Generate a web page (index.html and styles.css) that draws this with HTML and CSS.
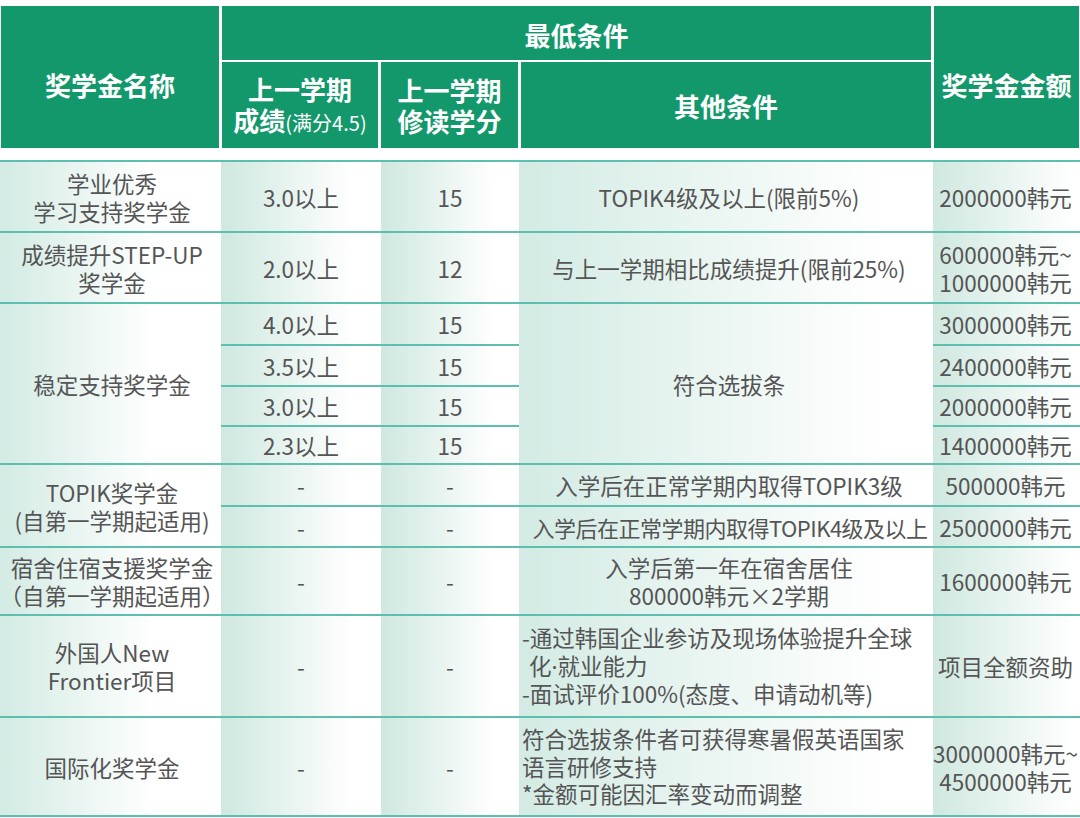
FILE: index.html
```html
<!DOCTYPE html>
<html lang="zh-CN">
<head>
<meta charset="utf-8">
<title>奖学金</title>
<link rel="stylesheet" href="styles.css">
</head>
<body>
<div class="sheet">
  <div class="head">
    <div class="hc h-name"><span>奖学金名称</span></div>
    <div class="hc h-min"><span>最低条件</span></div>
    <div class="hc h-amt"><span>奖学金金额</span></div>
    <div class="hc h-sub"><span>上一学期<br>成绩<span class="small">(满分4.5)</span></span></div>
    <div class="hc h-sub"><span>上一学期<br>修读学分</span></div>
    <div class="hc h-sub"><span>其他条件</span></div>
  </div>

  <div class="body">
    <div class="c c1"><span>学业优秀<br>学习支持奖学金</span></div>
    <div class="c c2"><span>3.0以上</span></div>
    <div class="c c3"><span>15</span></div>
    <div class="c c4"><span>TOPIK4级及以上(限前5%)</span></div>
    <div class="c c5"><span>2000000韩元</span></div>

    <div class="c c1"><span>成绩提升STEP-UP<br>奖学金</span></div>
    <div class="c c2"><span>2.0以上</span></div>
    <div class="c c3"><span>12</span></div>
    <div class="c c4"><span>与上一学期相比成绩提升(限前25%)</span></div>
    <div class="c c5"><span>600000韩元~<br>1000000韩元</span></div>

    <div class="c c1 span4"><span>稳定支持奖学金</span></div>
    <div class="c c2"><span>4.0以上</span></div>
    <div class="c c3"><span>15</span></div>
    <div class="c c4 span4"><span>符合选拔条</span></div>
    <div class="c c5"><span>3000000韩元</span></div>
    <div class="c c2"><span>3.5以上</span></div>
    <div class="c c3"><span>15</span></div>
    <div class="c c5"><span>2400000韩元</span></div>
    <div class="c c2"><span>3.0以上</span></div>
    <div class="c c3"><span>15</span></div>
    <div class="c c5"><span>2000000韩元</span></div>
    <div class="c c2"><span>2.3以上</span></div>
    <div class="c c3"><span>15</span></div>
    <div class="c c5"><span>1400000韩元</span></div>

    <div class="c c1 span2"><span>TOPIK奖学金<br>(自第一学期起适用)</span></div>
    <div class="c c2"><span>-</span></div>
    <div class="c c3"><span>-</span></div>
    <div class="c c4"><span>入学后在正常学期内取得TOPIK3级</span></div>
    <div class="c c5"><span>500000韩元</span></div>
    <div class="c c2"><span>-</span></div>
    <div class="c c3"><span>-</span></div>
    <div class="c c4 tight"><span>入学后在正常学期内取得TOPIK4级及以上</span></div>
    <div class="c c5"><span>2500000韩元</span></div>

    <div class="c c1"><span>宿舍住宿支援奖学金<br>（自第一学期起适用）</span></div>
    <div class="c c2"><span>-</span></div>
    <div class="c c3"><span>-</span></div>
    <div class="c c4"><span>入学后第一年在宿舍居住<br>800000韩元×2学期</span></div>
    <div class="c c5"><span>1600000韩元</span></div>

    <div class="c c1"><span>外国人New<br>Frontier项目</span></div>
    <div class="c c2"><span>-</span></div>
    <div class="c c3"><span>-</span></div>
    <div class="c c4 left">
      <div class="list">
        <div class="item">-通过韩国企业参访及现场体验提升全球<br>化<span class="dot">·</span>就业能力</div>
        <div class="item">-面试评价100%(态度、申请动机等)</div>
      </div>
    </div>
    <div class="c c5"><span>项目全额资助</span></div>

    <div class="c c1"><span>国际化奖学金</span></div>
    <div class="c c2"><span>-</span></div>
    <div class="c c3"><span>-</span></div>
    <div class="c c4 left">
      <div class="list">符合选拔条件者可获得寒暑假英语国家<br>语言研修支持<br>*金额可能因汇率变动而调整</div>
    </div>
    <div class="c c5"><span>3000000韩元~<br>4500000韩元</span></div>
  </div>
</div>
</body>
</html>
```

FILE: styles.css
```css
html, body {
  margin: 0;
  padding: 0;
  background: #ffffff;
}

body {
  width: 1080px;
  height: 818px;
  overflow: hidden;
  font-family: "Noto Sans CJK SC", "Noto Sans", sans-serif;
}

.sheet {
  padding-top: 6px;
}

.head {
  display: grid;
  grid-template-columns: 218px 156px 137px 410px 145px;
  grid-template-rows: 54px 86px;
  column-gap: 3px;
  row-gap: 2px;
  padding-left: 1px;
}

.hc {
  background: #13986b;
  color: #ffffff;
  font-weight: 700;
  font-size: 26px;
  line-height: 31px;
  display: flex;
  align-items: center;
  justify-content: center;
  text-align: center;
  white-space: nowrap;
}

.h-name {
  grid-column: 1;
  grid-row: 1 / 3;
  padding-top: 14px;
}

.h-min {
  grid-column: 2 / 5;
  grid-row: 1;
  padding-top: 3px;
}

.h-amt {
  grid-column: 5;
  grid-row: 1 / 3;
  padding-top: 14px;
}

.small {
  font-size: 20px;
  font-weight: 400;
}

.body {
  margin-top: 12px;
  border-top: 2px solid #5fbfae;
  display: grid;
  grid-template-columns: 221px 160px 138px 414px 147px;
  grid-template-rows: 71px 71px 42px 41px 40px 38px 42px 41px 68px 102px 99px;
}

.c {
  box-sizing: border-box;
  border-bottom: 2px solid #5fbfae;
  display: flex;
  align-items: center;
  justify-content: center;
  text-align: center;
  font-size: 22.5px;
  line-height: 28px;
  color: #555555;
  white-space: nowrap;
  background: linear-gradient(to right, #cfe8e0 0%, #ffffff 82%);
}

.c1 {
  grid-column: 1;
  padding-left: 3px;
  background: linear-gradient(to right, #d3ebe4 0%, #ffffff 70%);
}

.c2 { grid-column: 2; }
.c3 { grid-column: 3; }
.c4 {
  grid-column: 4;
  padding-left: 6px;
  background: linear-gradient(to right, #d3ebe4 0%, #ffffff 88%);
}
.c5 {
  grid-column: 5;
  padding-right: 2px;
  background: linear-gradient(to right, #cfe8e0 0%, #ffffff 95%);
}

.tight {
  font-size: 22px;
  letter-spacing: -0.5px;
  padding-left: 8px;
}

.span4 { grid-row: span 4; }
.span2 { grid-row: span 2; }

.left {
  justify-content: flex-start;
  text-align: left;
  padding-left: 3px;
}

.list {
  line-height: 27.5px;
}

.item {
  padding-left: 7px;
  text-indent: -7px;
}

.dot {
  font-family: "Noto Sans", sans-serif;
}
```
